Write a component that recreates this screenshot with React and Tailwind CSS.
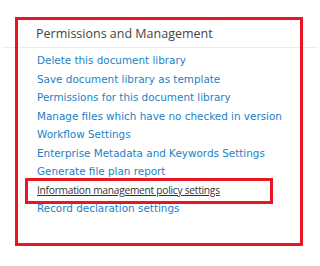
export default function App() {
  const links = [
    "Delete this document library",
    "Save document library as template",
    "Permissions for this document library",
    "Manage files which have no checked in version",
    "Workflow Settings",
    "Enterprise Metadata and Keywords Settings",
    "Generate file plan report",
    "Information management policy settings",
    "Record declaration settings",
  ];
  return (
    <div
      className="relative w-[320px] h-[266px] bg-white overflow-hidden"
      style={{ fontFamily: '"DejaVu Sans", Verdana, sans-serif' }}
    >
      <div className="pt-[26px]">
        <h2
          className="pl-[36px] text-[12.5px] leading-[16px] text-[#444444] font-normal"
          style={{ fontFamily: '"Open Sans", sans-serif' }}
        >
          Permissions and Management
        </h2>
        <div className="mt-[5px] mx-[2px] h-px bg-[#ececec]" />
        <ul className="pl-[37px] mt-[3px] text-[10.4px] leading-[18.5px]">
          {links.map((t, i) =>
            i === 7 ? (
              <li
                key={t}
                className="text-[#333333] underline text-[10.2px] tracking-[-0.25px]"
                style={{ fontFamily: '"Open Sans", sans-serif' }}
              >
                {t}
              </li>
            ) : (
              <li key={t} className="text-[#1c7fc8]">
                {t}
              </li>
            )
          )}
        </ul>
      </div>
      <div className="absolute left-[15px] top-[17px] w-[288px] h-[229px] border-[3px] border-[#ea1520]" />
      <div className="absolute left-[25px] top-[178px] w-[248px] h-[26px] border-[3px] border-[#ea1520]" />
    </div>
  );
}
